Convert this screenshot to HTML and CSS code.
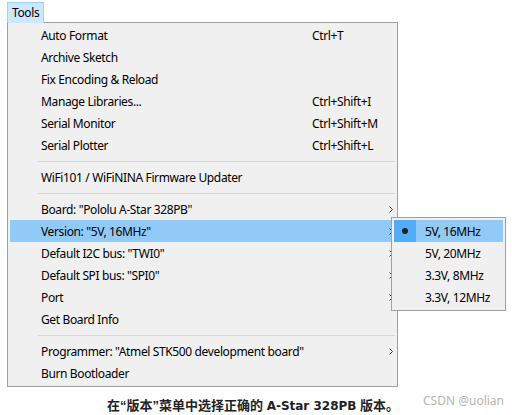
FILE: index.html
```html
<!DOCTYPE html>
<html lang="zh">
<head>
<meta charset="utf-8">
<title>Tools menu</title>
<link rel="stylesheet" href="styles.css">
</head>
<body>
<div class="menubar"><span class="tab">Tools</span></div>
<div class="menu">
  <div class="item"><span class="label">Auto Format</span><span class="key">Ctrl+T</span></div>
  <div class="item"><span class="label">Archive Sketch</span></div>
  <div class="item"><span class="label">Fix Encoding &amp; Reload</span></div>
  <div class="item"><span class="label">Manage Libraries...</span><span class="key">Ctrl+Shift+I</span></div>
  <div class="item"><span class="label">Serial Monitor</span><span class="key">Ctrl+Shift+M</span></div>
  <div class="item"><span class="label">Serial Plotter</span><span class="key">Ctrl+Shift+L</span></div>
  <div class="sep"></div>
  <div class="item"><span class="label">WiFi101 / WiFiNINA Firmware Updater</span></div>
  <div class="sep"></div>
  <div class="item"><span class="label">Board: "Pololu A-Star 328PB"</span><span class="key"></span><svg class="arrow" viewBox="0 0 5 7" width="5" height="7"><polyline points="0.5,0.5 3.5,3.5 0.5,6.5"/></svg></div>
  <div class="item active"><span class="label">Version: "5V, 16MHz"</span><span class="key"></span><svg class="arrow" viewBox="0 0 5 7" width="5" height="7"><polyline points="0.5,0.5 3.5,3.5 0.5,6.5"/></svg></div>
  <div class="item"><span class="label">Default I2C bus: "TWI0"</span><span class="key"></span><svg class="arrow" viewBox="0 0 5 7" width="5" height="7"><polyline points="0.5,0.5 3.5,3.5 0.5,6.5"/></svg></div>
  <div class="item"><span class="label">Default SPI bus: "SPI0"</span><span class="key"></span><svg class="arrow" viewBox="0 0 5 7" width="5" height="7"><polyline points="0.5,0.5 3.5,3.5 0.5,6.5"/></svg></div>
  <div class="item"><span class="label">Port</span><span class="key"></span><svg class="arrow" viewBox="0 0 5 7" width="5" height="7"><polyline points="0.5,0.5 3.5,3.5 0.5,6.5"/></svg></div>
  <div class="item"><span class="label">Get Board Info</span></div>
  <div class="sep"></div>
  <div class="item"><span class="label">Programmer: "Atmel STK500 development board"</span><span class="key"></span><svg class="arrow" viewBox="0 0 5 7" width="5" height="7"><polyline points="0.5,0.5 3.5,3.5 0.5,6.5"/></svg></div>
  <div class="item"><span class="label">Burn Bootloader</span></div>
</div>
<div class="submenu">
  <div class="subitem active"><span class="check"><span class="dot"></span></span><span class="sublabel">5V, 16MHz</span></div>
  <div class="subitem"><span class="check"></span><span class="sublabel">5V, 20MHz</span></div>
  <div class="subitem"><span class="check"></span><span class="sublabel">3.3V, 8MHz</span></div>
  <div class="subitem"><span class="check"></span><span class="sublabel">3.3V, 12MHz</span></div>
</div>
<p class="caption">在“版本”菜单中选择正确的 <span class="latin">A-Star 328PB</span> 版本。</p>
<div class="watermark">CSDN @uolian</div>
</body>
</html>
```
FILE: styles.css
```css
html, body {
  margin: 0;
  padding: 0;
  background: #ffffff;
}
body {
  position: relative;
  width: 512px;
  height: 415px;
  overflow: hidden;
  font-family: "Noto Sans", "Open Sans", sans-serif;
  font-size: 12px;
  letter-spacing: -0.37px;
  color: #000000;
}
.menubar {
  padding: 2px 0 0 7px;
  height: 20px;
  display: flex;
}
.tab {
  box-sizing: border-box;
  width: 37px;
  height: 21px;
  padding: 0 0 0 4px;
  background: #cce8ff;
  border: 1px solid #99d1ff;
  border-bottom: none;
  line-height: 19px;
}
.menu {
  box-sizing: border-box;
  margin-left: 7px;
  width: 391px;
  border: 1px solid #a0a0a0;
  background: #f0f0f0;
  padding: 1px 2px 2px 2px;
}
.item {
  display: flex;
  align-items: center;
  height: 22px;
  padding-left: 31px;
  padding-right: 1px;
}
.item.active {
  background: #91c9f7;
}
.label {
  flex: 0 0 271px;
  white-space: nowrap;
}
.key {
  flex: 1;
  white-space: nowrap;
}
.arrow {
  display: block;
  fill: none;
  stroke: #3c3c3c;
  stroke-width: 1;
}
.sep {
  height: 10px;
  margin-left: 28px;
  display: flex;
  align-items: center;
}
.sep::after {
  content: "";
  flex: 1;
  height: 1px;
  background: #d7d7d7;
}
.submenu {
  position: absolute;
  left: 391px;
  top: 217px;
  box-sizing: border-box;
  width: 115px;
  border: 1px solid #a0a0a0;
  background: #f0f0f0;
  padding: 2px;
}
.subitem {
  display: flex;
  align-items: center;
  height: 22px;
}
.subitem.active {
  background: #91c9f7;
}
.check {
  width: 22px;
  height: 22px;
  display: flex;
  align-items: center;
  justify-content: center;
}
.subitem.active .check {
  background: #55acf6;
}
.dot {
  width: 6px;
  height: 6px;
  border-radius: 50%;
  background: #222;
}
.sublabel {
  padding-left: 9px;
  white-space: nowrap;
}
.caption {
  margin: 11px 0 0 107px;
  font-family: "Liberation Sans", "Noto Sans CJK SC", sans-serif;
  font-weight: bold;
  font-size: 13px;
  letter-spacing: 0;
  line-height: 16px;
  color: #222;
  white-space: nowrap;
}
.latin {
  font-family: "DejaVu Sans", sans-serif;
  font-size: 12px;
}
.watermark {
  position: absolute;
  left: 423px;
  top: 392px;
  font-family: "Noto Sans", sans-serif;
  font-size: 12px;
  letter-spacing: 0;
  color: #b4b4b4;
}
```
